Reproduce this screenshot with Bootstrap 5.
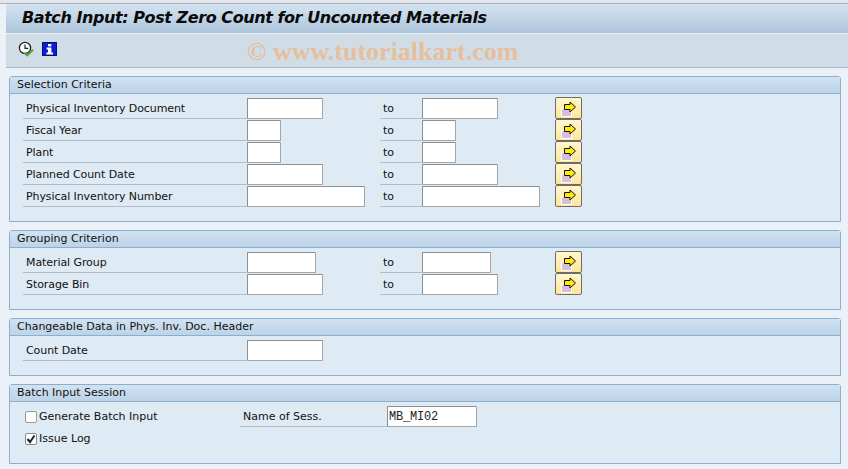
<!DOCTYPE html>
<html lang="en">
<head>
<meta charset="utf-8">
<title>Batch Input</title>
<link href="https://cdn.jsdelivr.net/npm/bootstrap@5.3.0/dist/css/bootstrap.min.css" rel="stylesheet">
<style>
html,body{height:469px;overflow:hidden}
body{background:#ebf1f8;color:#111;font-family:"DejaVu Sans","Noto Sans",sans-serif;font-size:11px;line-height:14px}
.topline{height:4px;background:#e3e6ec;border-bottom:1px solid #a9b3c0}
.shell{padding-left:6px}
.titlebar{height:30px;background:linear-gradient(#d5e3f0,#adc5dc);border-bottom:1px solid #e6edf3;padding-left:16px;font-size:16px;letter-spacing:-.43px;font-weight:700;font-style:italic;color:#0a0a0a;line-height:28px;white-space:nowrap}
.toolbar{height:34px;background:#d0dde7;border-bottom:1px solid #a9b8c6;padding-left:12px}
.wmark{font-family:"Liberation Serif",serif;font-weight:700;font-size:26px;color:#e6bf9c;margin:2px 0 0 190px;white-space:nowrap;line-height:32px}
.tool{width:16px;height:16px;display:block;margin-top:-3px;flex:none}
.tool-i{width:15px;height:14px;margin-left:8px}
.boxes{padding:8px 7px 0 3px}
.grp{border:1px solid #8fadcc;border-radius:3px 3px 0 0;background:#deeaf4;margin-bottom:8px}
.grp-head{height:17px;background:linear-gradient(#d2e2f0,#bcd3e8);border-bottom:1px solid #8fadcc;padding:1px 0 0 7px;line-height:14px}
.grp-body{padding-top:4px}
.s1{height:127px}.s2{height:61px}.s3{height:39px}.s4{height:61px}
.frow{height:22px;padding-left:13px;align-items:flex-start}
.lab{height:21px;border-bottom:1px solid #b3bdc7;padding:4px 0 0 3px;white-space:nowrap;flex:none}
.l1{width:224px;letter-spacing:-.08px}.l2{width:42px}
.fld{display:block;height:21px;flex:none;background:#fff;border:1px solid #a5a5a5;border-top-color:#8f8f8f;border-left-color:#8f8f8f;border-radius:1px;padding:0 1px;font-family:"Liberation Mono",monospace;font-size:12px;letter-spacing:-.2px;color:#222;outline:0}
.w76{width:76px}.w34{width:34px}.w118{width:118px}.w69{width:69px}.w90{width:90px}
.arrowbtn{flex:none;width:27px;height:22px;margin-top:-1px;padding:0;background:linear-gradient(#fff7cf,#ffe59a);border:1px solid #6f6c63;border-radius:2px;display:block}
.arrowbtn svg{display:block;margin:1px 0 0 4px}
.sp76{margin-left:57px}.sp69{margin-left:64px}.sp34{margin-left:99px}.sp118{margin-left:15px}
.form-check-input.cbx{width:12px;height:12px;margin:5px 2px 0 0;border:1px solid #9a9a9a;border-radius:2px;background-color:#fff;flex:none;box-shadow:none}
.form-check-input.cbx:checked{background-color:#fff;border-color:#8a8a8a;background-image:url("data:image/svg+xml,%3csvg xmlns='http://www.w3.org/2000/svg' viewBox='0 0 12 12'%3e%3cpath fill='none' stroke='%23222' stroke-width='2' d='M2.5 6l2.5 3L9.5 2.5'/%3e%3c/svg%3e");background-size:12px 12px}
.chk{height:22px;padding-left:15px;align-items:flex-start}
.chk label{padding-top:4px;white-space:nowrap}
.chk1{width:215px;flex:none}
.lab-s{width:147px}
.sprite{width:0;height:0;position:absolute}
</style>
</head>
<body>
<svg class="sprite" aria-hidden="true"><symbol id="arw" viewBox="0 0 18 18"><rect x="1.5" y="8.5" width="10" height="8" fill="#d4bfdc" stroke="#fff"/><path d="M4.5 4.5H10V2L15.5 7L10 12V9.5H4.5Z" fill="#ffe900" stroke="#111"/></symbol></svg>
<div class="topline"></div>
<div class="shell">
  <div class="titlebar">Batch Input: Post Zero Count for Uncounted Materials</div>
  <div class="toolbar d-flex align-items-center">
    <svg class="tool" viewBox="0 0 16 16"><circle cx="7" cy="7" r="5.6" fill="#fff" stroke="#222" stroke-width="1.3"/><path d="M7 3.5V7.3H10.2" fill="none" stroke="#222" stroke-width="1.2"/><path d="M6.5 11.5L9.2 14.2L15 8.8" fill="none" stroke="#4fa33a" stroke-width="2.2"/></svg>
    <svg class="tool tool-i" viewBox="0 0 15 14"><rect x="0.5" y="0.5" width="14" height="13" fill="#0b1fd0" stroke="#04107a"/><rect x="6" y="2" width="3.4" height="2.4" fill="#fff"/><path d="M4.6 5.6H9.4V10.6H11V12.4H4.4V10.6H6V7.4H4.6Z" fill="#fff"/></svg>
    <div class="wmark">© www.tutorialkart.com</div>
  </div>
  <div class="boxes">
    <section class="grp">
      <div class="grp-head">Selection Criteria</div>
      <div class="grp-body s1">
        <div class="frow d-flex"><div class="lab l1">Physical Inventory Document</div><input class="fld w76"><div class="lab l2 sp76">to</div><input class="fld w76"><button class="arrowbtn sp76"><svg width="18" height="18"><use href="#arw"/></svg></button></div>
        <div class="frow d-flex"><div class="lab l1">Fiscal Year</div><input class="fld w34"><div class="lab l2 sp34">to</div><input class="fld w34"><button class="arrowbtn sp34"><svg width="18" height="18"><use href="#arw"/></svg></button></div>
        <div class="frow d-flex"><div class="lab l1">Plant</div><input class="fld w34"><div class="lab l2 sp34">to</div><input class="fld w34"><button class="arrowbtn sp34"><svg width="18" height="18"><use href="#arw"/></svg></button></div>
        <div class="frow d-flex"><div class="lab l1">Planned Count Date</div><input class="fld w76"><div class="lab l2 sp76">to</div><input class="fld w76"><button class="arrowbtn sp76"><svg width="18" height="18"><use href="#arw"/></svg></button></div>
        <div class="frow d-flex"><div class="lab l1">Physical Inventory Number</div><input class="fld w118"><div class="lab l2 sp118">to</div><input class="fld w118"><button class="arrowbtn sp118"><svg width="18" height="18"><use href="#arw"/></svg></button></div>
      </div>
    </section>
    <section class="grp">
      <div class="grp-head">Grouping Criterion</div>
      <div class="grp-body s2">
        <div class="frow d-flex"><div class="lab l1">Material Group</div><input class="fld w69"><div class="lab l2 sp69">to</div><input class="fld w69"><button class="arrowbtn sp69"><svg width="18" height="18"><use href="#arw"/></svg></button></div>
        <div class="frow d-flex"><div class="lab l1">Storage Bin</div><input class="fld w76"><div class="lab l2 sp76">to</div><input class="fld w76"><button class="arrowbtn sp76"><svg width="18" height="18"><use href="#arw"/></svg></button></div>
      </div>
    </section>
    <section class="grp">
      <div class="grp-head">Changeable Data in Phys. Inv. Doc. Header</div>
      <div class="grp-body s3">
        <div class="frow d-flex"><div class="lab l1">Count Date</div><input class="fld w76"></div>
      </div>
    </section>
    <section class="grp">
      <div class="grp-head">Batch Input Session</div>
      <div class="grp-body s4">
        <div class="chk d-flex"><div class="d-flex chk1"><input type="checkbox" class="form-check-input cbx" id="c1"><label for="c1">Generate Batch Input</label></div><div class="lab lab-s">Name of Sess.</div><input class="fld w90" value="MB_MI02"></div>
        <div class="chk d-flex"><input type="checkbox" class="form-check-input cbx" id="c2" checked><label for="c2">Issue Log</label></div>
      </div>
    </section>
  </div>
</div>
<script src="https://cdn.jsdelivr.net/npm/bootstrap@5.3.0/dist/js/bootstrap.bundle.min.js"></script>
</body>
</html>
